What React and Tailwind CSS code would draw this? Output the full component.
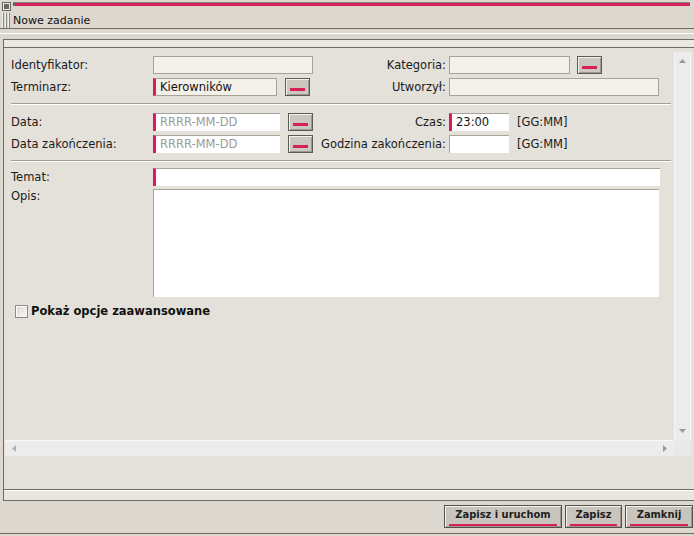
import React from 'react'

const PINK = 'border-l-[#e0185c]'

function PickButton() {
  return (
    <div className="w-[25px] h-[18px] shrink-0 border border-[#5e5b54] bg-[#cbc7bf] shadow-[inset_1px_1px_0_#f4f2ee,inset_-1px_-1px_0_#9c988f] flex items-end justify-center pb-[4px]">
      <div className="w-[15px] h-[3px] bg-[#d81f5a]" />
    </div>
  )
}

function ReadOnly({ w, pink, children }) {
  return (
    <div
      className={`h-[18px] shrink-0 bg-[#f3f0ea] border border-[#a8a397] flex items-center pl-[4px] pt-[1px] text-[#111] ${
        pink ? `border-l-[3px] ${PINK}` : ''
      }`}
      style={{ width: w }}
    >
      {children}
    </div>
  )
}

function WhiteInput({ w, pink, placeholder, children }) {
  return (
    <div
      className={`h-[18px] shrink-0 bg-white border-t border-[#a8a397] flex items-center pl-[4px] pt-[1px] ${
        pink ? `border-l-[3px] ${PINK}` : 'border-l border-l-[#a8a397]'
      }`}
      style={{ width: w }}
    >
      {placeholder ? <span className="text-[#9a9a9a]">{placeholder}</span> : <span className="text-[#111]">{children}</span>}
    </div>
  )
}

function Row({ children, className = '' }) {
  return <div className={`flex items-center h-[18px] pl-[6px] ${className}`}>{children}</div>
}

function Label({ children }) {
  return <div className="w-[142px] shrink-0 pt-[2px] text-[#1a1a1a]">{children}</div>
}

function RightLabel({ children }) {
  return <div className="w-[136px] shrink-0 pt-[2px] text-right pr-[3px] text-[#1a1a1a] whitespace-nowrap">{children}</div>
}

function Separator() {
  return <div className="ml-[6px] mr-[3px] border-t border-[#a39e92] border-b border-b-white" />
}

function BottomButton({ w, children }) {
  return (
    <div
      className="h-[23px] border border-[#55524b] bg-[#c9c5bd] shadow-[inset_1px_1px_0_#f4f2ee,inset_-1px_-1px_0_#9c988f] flex flex-col items-stretch px-[4px] pt-[2px]"
      style={{ width: w }}
    >
      <div className="text-center font-bold text-[#1e1e1e] leading-[14px] text-[11px] font-['DejaVu_Sans_Condensed','DejaVu_Sans',sans-serif]">
        {children}
      </div>
      <div className="mt-[2px] h-[2px] bg-[#d81f5a]" />
    </div>
  )
}

export default function App() {
  return (
    <div className="w-[694px] h-[536px] bg-[#dcd8d0] flex flex-col overflow-hidden text-[11.5px] font-['DejaVu_Sans',sans-serif]">
      {/* title bar */}
      <div className="h-[12px] flex items-start">
        <div className="ml-[2px] mt-[2px] w-[9px] h-[9px] border border-[#6a665e] bg-[#ece9e3] flex items-center justify-center">
          <div className="w-[5px] h-[5px] bg-[#6a665e]" />
        </div>
        <div className="ml-[2px] mt-[2px] mr-[4px] flex-1 border-t border-[#8c877d] h-[4px] bg-[#d4235c] border-l-2 border-l-[#6a665e]" />
      </div>
      <div className="h-[16px] flex items-center">
        <div className="ml-[2px] flex gap-[1px] h-[15px]">
          <div className="w-[2px] bg-[#f2f0ec] border-r border-[#8c877d]" />
          <div className="w-[2px] bg-[#f2f0ec] border-r border-[#8c877d]" />
          <div className="w-[2px] bg-[#f2f0ec] border-r border-[#8c877d]" />
        </div>
        <span className="ml-[3px] pt-[2px] text-[#111] text-[11px]">Nowe zadanie</span>
      </div>
      <div className="h-[1px] bg-[#6f6b63]" />
      <div className="h-[10px] flex flex-col">
        <div className="h-[4px]" />
        <div className="h-[1px] bg-white" />
      </div>

      {/* panel */}
      <div className="ml-[3px] h-[462px] border-l border-t border-[#6f6b63] bg-[#e4e1da] flex flex-col">
        <div className="h-[8px] bg-[#ebe8e2] border-b border-[#6f6b63]" />
        <div className="grid grid-cols-[1fr_17px] grid-rows-[1fr_16px] h-[408px] ml-[1px] mr-[3px]">
          {/* content */}
          <div className="pt-[8px] flex flex-col">
            <Row>
              <Label>Identyfikator:</Label>
              <div className="w-[160px] shrink-0">
                <ReadOnly w={160} />
              </div>
              <RightLabel>Kategoria:</RightLabel>
              <ReadOnly w={121} />
              <div className="ml-[7px]">
                <PickButton />
              </div>
            </Row>
            <Row className="mt-[4px]">
              <Label>Terminarz:</Label>
              <div className="w-[160px] shrink-0 flex items-center">
                <ReadOnly w={124} pink>
                  Kierowników
                </ReadOnly>
                <div className="ml-[8px]">
                  <PickButton />
                </div>
              </div>
              <RightLabel>Utworzył:</RightLabel>
              <ReadOnly w={210} />
            </Row>
            <div className="mt-[7px] mb-[8px]">
              <Separator />
            </div>
            <Row>
              <Label>Data:</Label>
              <div className="w-[160px] shrink-0 flex items-center">
                <WhiteInput w={127} pink placeholder="RRRR-MM-DD" />
                <div className="ml-[8px]">
                  <PickButton />
                </div>
              </div>
              <RightLabel>Czas:</RightLabel>
              <WhiteInput w={60} pink>
                23:00
              </WhiteInput>
              <span className="ml-[8px] pt-[2px] text-[#1a1a1a]">[GG:MM]</span>
            </Row>
            <Row className="mt-[4px]">
              <Label>Data zakończenia:</Label>
              <div className="w-[160px] shrink-0 flex items-center">
                <WhiteInput w={127} pink placeholder="RRRR-MM-DD" />
                <div className="ml-[8px]">
                  <PickButton />
                </div>
              </div>
              <RightLabel>Godzina zakończenia:</RightLabel>
              <WhiteInput w={60} />
              <span className="ml-[8px] pt-[2px] text-[#1a1a1a]">[GG:MM]</span>
            </Row>
            <div className="mt-[7px] mb-[6px]">
              <Separator />
            </div>
            <Row>
              <Label>Temat:</Label>
              <div className="h-[18px] w-[507px] bg-white border-t border-[#a8a397] border-l-[3px] border-l-[#e0185c]" />
            </Row>
            <div className="flex pl-[6px] mt-[3px]">
              <div className="w-[142px] shrink-0 pt-[1px] text-[#1a1a1a] leading-[13px]">Opis:</div>
              <div className="w-[506px] h-[108px] bg-white border-t border-l border-[#a8a397]" />
            </div>
            <div className="flex items-center pl-[10px] mt-[6px] h-[16px]">
              <div className="w-[13px] h-[13px] border border-[#8f8b83] bg-gradient-to-br from-[#d9d6d0] to-[#fbfbfa] shadow-[inset_1px_1px_0_#fff]" />
              <span className="ml-[3px] pt-[1px] font-bold text-[#111]">Pokaż opcje zaawansowane</span>
            </div>
          </div>

          {/* vertical scrollbar */}
          <div className="mt-[4px] bg-[#ececec] border-l border-r border-[#f6f6f6] flex flex-col items-center justify-between py-[6px]">
            <svg width="9" height="6" viewBox="0 0 9 6">
              <path d="M4.5 1 L8 5 L1 5 Z" fill="#9a9a9a" />
            </svg>
            <svg width="9" height="6" viewBox="0 0 9 6">
              <path d="M1 1 L8 1 L4.5 5 Z" fill="#9a9a9a" />
            </svg>
          </div>

          {/* horizontal scrollbar */}
          <div className="bg-[#ececec] border-t border-[#f8f8f8] flex items-center justify-between px-[6px]">
            <svg width="6" height="9" viewBox="0 0 6 9">
              <path d="M1 4.5 L5 1 L5 8 Z" fill="#b0b0b0" />
            </svg>
            <svg width="6" height="9" viewBox="0 0 6 9">
              <path d="M1 1 L5 4.5 L1 8 Z" fill="#9a9a9a" />
            </svg>
          </div>
          <div className="bg-[#e9e9e9]" />
        </div>
        <div className="flex-1" />
        <div className="h-[12px] border-t border-[#6f6b63] border-b bg-[#e9e6e0] shadow-[inset_0_1px_0_#fff]" />
      </div>

      {/* buttons */}
      <div className="flex justify-end gap-[3px] pt-[4px] pr-[1px]">
        <BottomButton w={118}>Zapisz i uruchom</BottomButton>
        <BottomButton w={57}>Zapisz</BottomButton>
        <BottomButton w={68}>Zamknij</BottomButton>
      </div>
      <div className="mt-[5px] h-[1px] bg-[#6f6b63]" />
    </div>
  )
}
